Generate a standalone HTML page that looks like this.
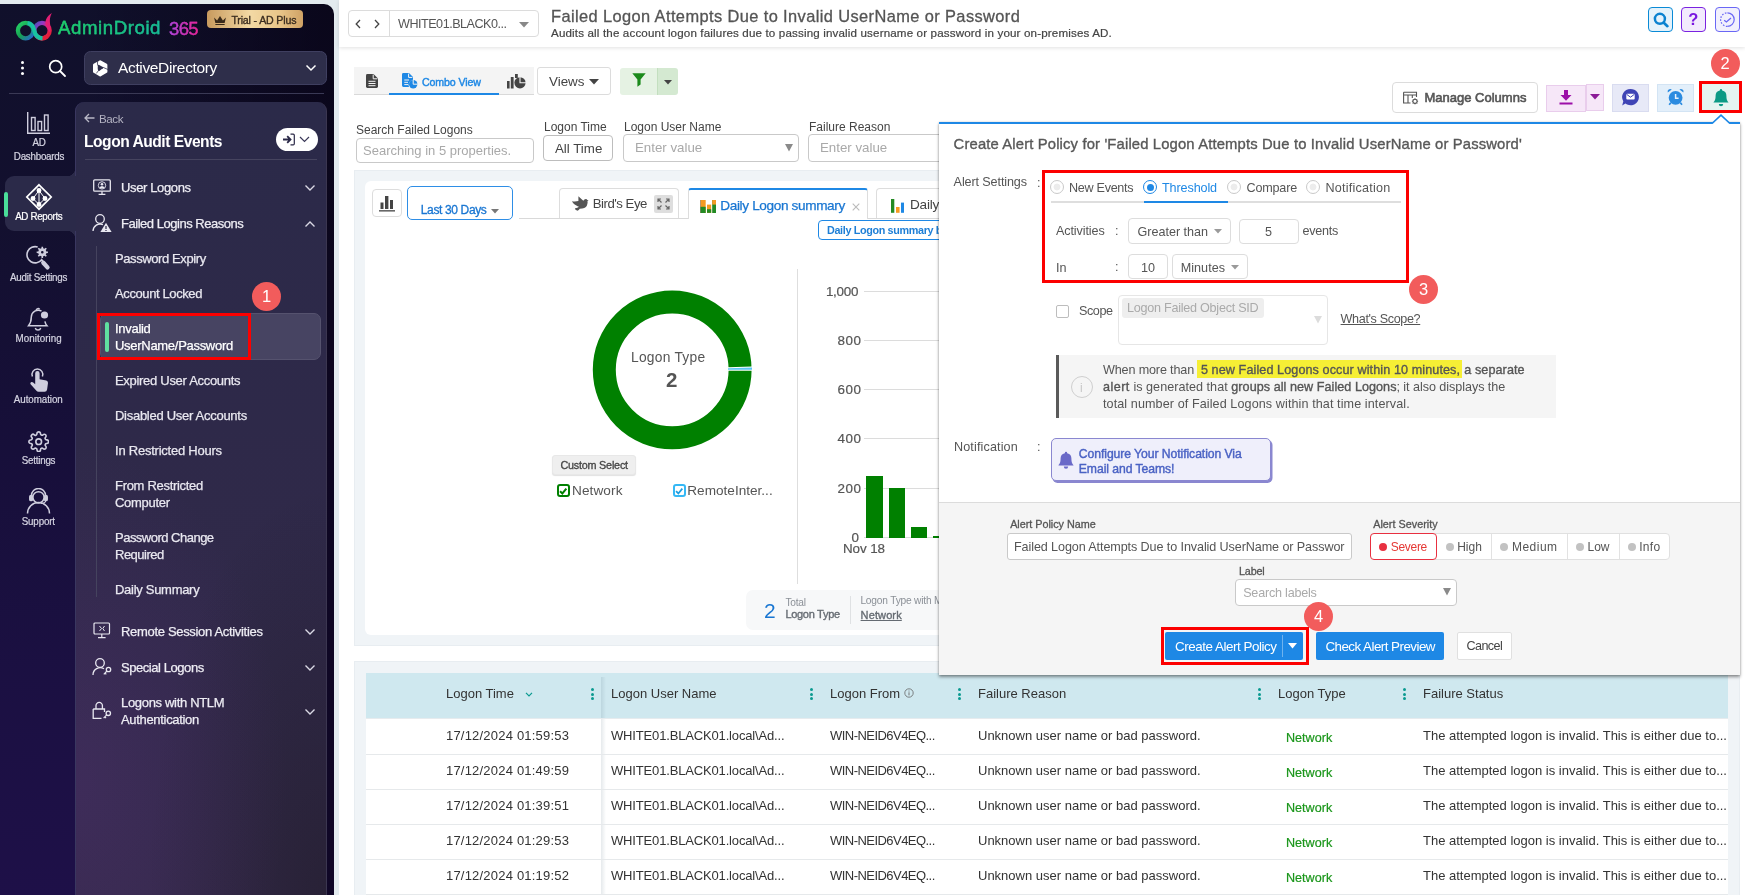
<!DOCTYPE html>
<html><head>
<meta charset="utf-8">
<title>AdminDroid</title>
<style>
*{box-sizing:border-box;margin:0;padding:0}
html,body{width:1745px;height:895px;overflow:hidden}
body{font-family:"Liberation Sans",sans-serif;background:#e3ebef;position:relative;color:#333}
#root{position:absolute;left:0;top:0;width:1745px;height:895px;will-change:transform}
.abs{position:absolute}
.t{position:absolute;white-space:nowrap;line-height:1}
/* ---------- sidebar ---------- */
#side{left:0;top:4px;width:334px;height:891px;border-radius:0 10px 0 0;background:linear-gradient(90deg,rgba(6,0,16,0) 25%,rgba(6,0,16,.6) 100%),linear-gradient(180deg,#10102b 0%,#13102f 25%,#170f3a 50%,#1b1042 75%,#1e1048 100%);overflow:hidden}
#panel{left:75px;top:102px;width:252px;height:800px;border-radius:9px 9px 0 0;background:radial-gradient(120% 60% at 0% 85%,rgba(95,50,135,.26) 0%,rgba(95,50,135,0) 70%),radial-gradient(90% 65% at 100% 100%,rgba(22,20,24,.40) 0%,rgba(22,20,24,0) 80%),linear-gradient(180deg,#2b2a49 0%,#2e2949 40%,#342a4a 100%);border-left:1px solid #3a3760;border-right:1px solid #3b3650}
.nav{position:absolute;left:1px;width:76px;text-align:center;color:#d6d5e3;font-size:9.8px;line-height:13px;letter-spacing:-.25px;-webkit-text-stroke:.2px currentColor;transform:scaleY(1.08)}
.mi{-webkit-text-stroke:.25px currentColor;position:absolute;left:115px;color:#e9e8f0;font-size:13px;line-height:17px;letter-spacing:-.33px;white-space:nowrap}
.mh{-webkit-text-stroke:.25px currentColor;position:absolute;left:121px;color:#eeedf4;font-size:13px;line-height:17px;letter-spacing:-.4px;white-space:nowrap}
.chev{position:absolute;left:303px;width:12px;height:8px}
/* ---------- main ---------- */
#hdr{left:339px;top:0;width:1406px;height:47px;background:#fff;box-shadow:0 1px 4px rgba(0,0,0,.12)}
.card{position:absolute;background:#fff}
.lbl{position:absolute;font-size:12px;color:#444;white-space:nowrap;line-height:1}
.inp{position:absolute;background:#fff;border:1px solid #c9c9c9;border-radius:3px}
/* table */
.th{position:absolute;top:686px;font-size:13px;color:#333;white-space:nowrap;line-height:15px}
.td{position:absolute;font-size:13px;color:#333;white-space:nowrap;line-height:15px}
.dots{position:absolute;top:688px;width:3px;height:12px}
.dots i{display:block;width:3px;height:3px;border-radius:2px;background:#0a9a90;margin-bottom:1.5px}
.rowline{position:absolute;left:366px;width:1362px;height:1px;background:#e6e9eb}
.yl{left:800px;font-size:13.4px;color:#555;-webkit-text-stroke:.2px #555}
.gl{left:864px;width:90px;height:1px;background:#dcdcdc}
/* popup */
.sd{top:543px;width:8px;height:8px;border-radius:4px;background:#c2c2c2}
.info{color:#555;font-size:12.8px}
.sb{-webkit-text-stroke:.35px currentColor}
.pt{position:absolute;white-space:nowrap;line-height:15px;color:#555;font-size:12.6px;letter-spacing:-.1px}
.badge{position:absolute;width:29px;height:29px;border-radius:15px;background:#f25c5c;color:#fff;font-size:16.5px;text-align:center;line-height:29px}
</style>
</head>
<body>
<div id="root">
<!-- SIDEBAR -->
<div id="side" class="abs"></div>
<div id="panel" class="abs"></div>
<!-- active nav tab -->
<div class="abs" style="left:5px;top:176px;width:71px;height:55px;border-radius:9px 0 0 9px;background:#2b2a49"></div>
<div class="abs" style="left:67px;top:168px;width:8px;height:8px;background:radial-gradient(circle at 0 0,transparent 8px,#2b2a49 8.5px)"></div>
<div class="abs" style="left:67px;top:231px;width:8px;height:8px;background:radial-gradient(circle at 0 100%,transparent 8px,#2b2a49 8.5px)"></div>
<div class="abs" style="left:4px;top:192px;width:4px;height:25px;border-radius:2px;background:#4ade9a"></div>
<!-- logo -->
<svg class="abs" style="left:14px;top:12px" width="42" height="30" viewBox="0 0 42 30">
 <defs>
  <linearGradient id="lg1" x1="0" y1="0" x2="1" y2="1"><stop offset="0" stop-color="#25d366"></stop><stop offset=".5" stop-color="#16a052"></stop><stop offset="1" stop-color="#2a62d8"></stop></linearGradient>
  <linearGradient id="lg2" x1="0" y1="0" x2="1" y2=".6"><stop offset="0" stop-color="#4450b5"></stop><stop offset=".4" stop-color="#9338c4"></stop><stop offset=".75" stop-color="#e31f74"></stop><stop offset="1" stop-color="#e0203a"></stop></linearGradient>
 </defs>
 <circle cx="28" cy="18.6" r="7.7" fill="none" stroke="url(#lg2)" stroke-width="4.3"></circle>
 <path d="M22.5 24 A7.7 7.7 0 0 0 33 24.5" fill="none" stroke="#e0203a" stroke-width="4.3"></path>
 <circle cx="11.6" cy="18.6" r="7.7" fill="none" stroke="url(#lg1)" stroke-width="4.3"></circle>
 <path d="M13.5 11.1 C18 11.6 19.6 15 20.3 18.6 C21 22.5 23.5 26 28.5 26.4" fill="none" stroke="#18c3a0" stroke-width="4.2"></path>
 <path d="M36.2 21 C38 14 33.5 9 37.8 .9 C32 4.5 30.2 10 32.4 14.5 Z" fill="#e31f74"></path>
</svg>
<div class="t" style="left: 58px; top: 19.4px; font-size: 18.6px; letter-spacing: 0.59px; background: linear-gradient(90deg, rgb(31, 209, 99), rgb(22, 184, 160)); -webkit-background-clip: text; background-clip: text; color: transparent; -webkit-text-stroke: .35px rgba(28,196,130,.9);">AdminDroid</div>
<div class="t" style="left: 169px; top: 19.6px; font-size: 18.5px; letter-spacing: -0.63px; background: linear-gradient(90deg, rgb(164, 75, 232), rgb(240, 32, 140)) text; color: transparent; -webkit-text-stroke: 0.3px rgba(200, 55, 190, 0.9);">365</div>
<!-- trial badge -->
<div class="abs" style="left:207px;top:10px;width:96px;height:18px;border-radius:4px;background:linear-gradient(90deg,#c89a5e 0%,#f3d9a4 45%,#e9c68a 75%,#d0a265 100%)"></div>
<svg class="abs" style="left:212.5px;top:14.5px" width="14" height="10.8" viewBox="0 0 13 10"><path d="M1 2.2 L3.8 5 L6.5 .8 L9.2 5 L12 2.2 L10.8 7.5 H2.2 Z M2.2 8.3 H10.8 V9.6 H2.2 Z" fill="#3a2a1a"></path></svg>
<div class="t" style="left: 231.4px; top: 15.2px; font-size: 10.6px; color: rgb(58, 44, 31); -webkit-text-stroke: 0.35px rgb(58, 44, 31); letter-spacing: -0.16px;">Trial - AD Plus</div>
<!-- dots & search -->
<div class="abs" style="left:21px;top:61px;width:3px;height:3px;border-radius:2px;background:#fff;box-shadow:0 5.5px 0 #fff,0 11px 0 #fff"></div>
<svg class="abs" style="left:48px;top:59px" width="19" height="19" viewBox="0 0 19 19"><circle cx="7.7" cy="7.7" r="6" fill="none" stroke="#fff" stroke-width="1.7"></circle><path d="M12 12 L17 17" stroke="#fff" stroke-width="1.8" stroke-linecap="round"></path></svg>
<!-- AD dropdown -->
<div class="abs" style="left:84px;top:51px;width:243px;height:34px;border-radius:6.5px;background:#2e2e4a;border:1px solid #3f3f60"></div>
<svg class="abs" style="left:92px;top:59.5px" width="17" height="17" viewBox="0 0 17 17"><path d="M8.2 1.6 L14.1 5 V11.7 L8.2 15.1 L2.3 11.7 V5 Z" fill="#fff" stroke="#fff" stroke-width="2.6" stroke-linejoin="round"/><path d="M5.9 5.2 Q6.2 4.6 7.2 5 L10.8 7 Q11.6 7.5 10.9 8.2 L7.2 10.9 Q6.3 11.3 6 10.3 Q5.5 7.8 5.9 5.2 Z" fill="#2e2e4a"/><path d="M5.9 .4 Q5.1 3 5.7 5.6 M10.9 7.3 L16.2 9.6 M6.5 10.6 L4.3 13.4" fill="none" stroke="#2e2e4a" stroke-width=".75"/></svg>
<div class="t" style="left:118px;top:60px;font-size:15.5px;color:#fff;letter-spacing:-.35px">ActiveDirectory</div>
<svg class="abs" style="left:305px;top:64px" width="12" height="8" viewBox="0 0 12 8"><path d="M1.5 1.5 L6 6 L10.5 1.5" fill="none" stroke="#fff" stroke-width="1.5"></path></svg>
<div class="abs" style="left:9px;top:93px;width:315px;height:1px;background:#3a3955"></div>

<!-- nav: AD Dashboards -->
<svg class="abs" style="left:26px;top:111px" width="25" height="24" viewBox="0 0 25 24" fill="none" stroke="#cfcede" stroke-width="1.4"><path d="M1.7 1 V22.3 H24"></path><rect x="5.5" y="6.5" width="3.6" height="13"></rect><rect x="12" y="10.5" width="3.6" height="9"></rect><rect x="18.5" y="4" width="3.6" height="15.5"></rect></svg>
<div class="nav" style="top:136px">AD<br>Dashboards</div>
<!-- nav: AD Reports -->
<svg class="abs" style="left:25px;top:183px" width="28" height="28" viewBox="0 0 28 28" fill="none" stroke="#fff" stroke-width="1.7"><path d="M14 1.8 L26.2 14 L14 26.2 L1.8 14 Z"></path><path d="M14 7.5 L20 15.5 L14 21.5 L8 15.5 Z M14 7.5 V21.5" stroke-width="1"></path><circle cx="14" cy="7.5" r="1.6" fill="#fff"></circle><circle cx="20" cy="15.5" r="1.6" fill="#fff"></circle><circle cx="8" cy="15.5" r="1.6" fill="#fff"></circle><circle cx="14" cy="21.5" r="1.6" fill="#fff"></circle></svg>
<div class="nav" style="top: 210px; color: rgb(255, 255, 255); left: 0.8px; letter-spacing: -0.34px;">AD Reports</div>
<!-- nav: Audit Settings -->
<svg class="abs" style="left:25px;top:245px" width="28" height="27" viewBox="0 0 28 27"><path d="M12.67 2 A8.15 8.15 0 1 0 16.66 14.65 L18 16.4" fill="none" stroke="#cfcede" stroke-width="1.6"/><path d="M18.3 17.7 L22.5 22.4" stroke="#cfcede" stroke-width="4.3" stroke-linecap="round"/><path d="M21.31 6.46 L22.94 6.50 L22.94 8.10 L21.31 8.14 L20.73 9.54 L21.85 10.73 L20.73 11.85 L19.54 10.73 L18.14 11.31 L18.10 12.94 L16.50 12.94 L16.46 11.31 L15.06 10.73 L13.87 11.85 L12.75 10.73 L13.87 9.54 L13.29 8.14 L11.66 8.10 L11.66 6.50 L13.29 6.46 L13.87 5.06 L12.75 3.87 L13.87 2.75 L15.06 3.87 L16.46 3.29 L16.50 1.66 L18.10 1.66 L18.14 3.29 L19.54 3.87 L20.73 2.75 L21.85 3.87 L20.73 5.06 Z M18.6 7.3 A1.3 1.3 0 1 0 16 7.3 A1.3 1.3 0 1 0 18.6 7.3 Z" fill="#cfcede" fill-rule="evenodd"/></svg>
<div class="nav" style="top: 271px; left: 0.6px; letter-spacing: -0.23px;">Audit Settings</div>
<!-- nav: Monitoring -->
<svg class="abs" style="left:27px;top:306px" width="24" height="27" viewBox="0 0 24 27" fill="none" stroke="#cfcede" stroke-width="1.5"><path d="M14.5 5 A7 7 0 0 0 4.3 11 C4.3 16 3 18 1.5 19.8 H20 C19 18.6 18.3 17.3 17.9 15.3"></path><path d="M8.3 22 A2.8 2.8 0 0 0 13.7 22"></path><path d="M9.2 4.2 A1.9 1.9 0 0 1 12.6 3.4"></path><circle cx="17.5" cy="9" r="3.6" fill="#cfcede" stroke="none"></circle></svg>
<div class="nav" style="top: 332px; left: 0.6px; letter-spacing: 0.05px;">Monitoring</div>
<!-- nav: Automation -->
<svg class="abs" style="left:27px;top:366px" width="24" height="28" viewBox="0 0 24 28"><path d="M8.2 12 V7.3 A2.2 2.2 0 0 1 12.6 7.3 V13.2 L19.3 14.6 Q21.2 15.1 21 17.1 L20.1 23.5 Q19.8 25.8 17.6 25.8 H11.6 Q10.2 25.8 9.2 24.6 L3.6 18.3 Q2.8 17.2 3.9 16.3 Q5 15.5 6.2 16.5 L8.2 18.3 Z" fill="#cfcede"></path><path d="M5.4 10.5 A5.4 5.4 0 1 1 15.4 10.5" fill="none" stroke="#cfcede" stroke-width="1.5"></path></svg>
<div class="nav" style="top: 393px; left: 0.3px; letter-spacing: -0.07px;">Automation</div>
<!-- nav: Settings -->
<svg class="abs" style="left:27.6px;top:430.8px" width="21.4" height="21.4" viewBox="0 0 24 24" fill="none" stroke="#cfcede" stroke-width="1.8" stroke-linejoin="round"><circle cx="12" cy="12" r="3.2"></circle><path d="M19.4 15a1.65 1.65 0 0 0 .33 1.82l.06.06a2 2 0 1 1-2.83 2.83l-.06-.06a1.65 1.65 0 0 0-1.82-.33 1.65 1.65 0 0 0-1 1.51V21a2 2 0 0 1-4 0v-.09A1.65 1.65 0 0 0 9 19.4a1.65 1.65 0 0 0-1.82.33l-.06.06a2 2 0 1 1-2.83-2.83l.06-.06a1.65 1.65 0 0 0 .33-1.82 1.65 1.65 0 0 0-1.51-1H3a2 2 0 0 1 0-4h.09A1.65 1.65 0 0 0 4.6 9a1.65 1.65 0 0 0-.33-1.82l-.06-.06a2 2 0 1 1 2.83-2.83l.06.06a1.65 1.65 0 0 0 1.82.33H9a1.65 1.65 0 0 0 1-1.51V3a2 2 0 0 1 4 0v.09a1.65 1.65 0 0 0 1 1.51 1.65 1.65 0 0 0 1.82-.33l.06-.06a2 2 0 1 1 2.83 2.83l-.06.06a1.65 1.65 0 0 0-.33 1.82V9a1.65 1.65 0 0 0 1.51 1H21a2 2 0 0 1 0 4h-.09a1.65 1.65 0 0 0-1.51 1z"></path></svg>
<div class="nav" style="top: 454px; left: 0.5px; letter-spacing: -0.23px;">Settings</div>
<!-- nav: Support -->
<svg class="abs" style="left:26px;top:488px" width="25" height="27" viewBox="0 0 25 27" fill="none" stroke="#cfcede" stroke-width="1.5"><circle cx="12.5" cy="9.3" r="5.6"></circle><path d="M1.5 25.5 A11 11 0 0 1 23.5 25.5"></path><path d="M5.5 10 V7.5 A7 7 0 0 1 19.5 7.5 V10"></path><rect x="3.8" y="7.6" width="2.6" height="5" rx="1.2" fill="#cfcede"></rect><rect x="18.6" y="7.6" width="2.6" height="5" rx="1.2" fill="#cfcede"></rect><path d="M19.8 12.5 Q19.5 15.3 15 15.5" stroke-width="1.2"></path></svg>
<div class="nav" style="top: 515px; left: 0.3px; letter-spacing: -0.16px;">Support</div>


<!-- panel header -->
<svg class="abs" style="left:84px;top:113px" width="11" height="10" viewBox="0 0 11 10"><path d="M5 1 L1 5 L5 9 M1 5 H10.5" fill="none" stroke="#b9b8c6" stroke-width="1.3"></path></svg>
<div class="t" style="left: 99px; top: 113px; font-size: 11.6px; color: rgb(180, 179, 194); letter-spacing: -0.45px;">Back</div>
<div class="t" style="left: 84px; top: 133.5px; font-size: 15.6px; font-weight: bold; color: rgb(255, 255, 255); letter-spacing: -0.48px;">Logon Audit Events</div>
<div class="abs" style="left:276px;top:128px;width:42px;height:23px;border-radius:12px;background:#fff"></div>
<svg class="abs" style="left:282px;top:133px" width="14" height="13" viewBox="0 0 14 13"><path d="M1 6.5 H8 M5.2 3.2 L8.5 6.5 L5.2 9.8" fill="none" stroke="#2a2847" stroke-width="1.8"></path><path d="M8.5 1.2 H11.2 Q12.3 1.2 12.3 2.3 V10.7 Q12.3 11.8 11.2 11.8 H8.5" fill="none" stroke="#2a2847" stroke-width="1.2"></path></svg>
<svg class="abs" style="left:299px;top:136px" width="11" height="7" viewBox="0 0 11 7"><path d="M1 1 L5.5 5.5 L10 1" fill="none" stroke="#3a3858" stroke-width="1.2"></path></svg>
<div class="abs" style="left:85px;top:159px;width:232px;height:1px;background:#46445f"></div>
<!-- User Logons -->
<svg class="abs" style="left:92px;top:178px" width="20" height="18" viewBox="0 0 20 18" fill="none" stroke="#e8e7f0" stroke-width="1.3"><rect x="1.7" y="1.9" width="16.6" height="11.3" rx="1"/><path d="M10 13.2 V16.2 M6.6 16.4 H13.4"/><circle cx="10" cy="7.4" r="3.7" stroke-width=".9"/><circle cx="10" cy="6.3" r="1.3" fill="#e8e7f0" stroke="none"/><path d="M7.2 9.6 Q10 6.4 12.8 9.6 Q10 11.6 7.2 9.6 Z" fill="#e8e7f0" stroke="none"/></svg>
<div class="mh" style="top: 179px; left: 121px; letter-spacing: -0.37px;">User Logons</div>
<svg class="abs" style="left:303.6px;top:183.6px" width="12" height="8" viewBox="0 0 12 8"><path d="M1.5 1.5 L6 6 L10.5 1.5" fill="none" stroke="#dad9e5" stroke-width="1.35"></path></svg>
<!-- Failed Logins Reasons -->
<svg class="abs" style="left:92px;top:213px" width="21" height="20" viewBox="0 0 21 20" fill="none" stroke="#e8e7f0" stroke-width="1.3"><circle cx="8" cy="6" r="4.3"></circle><path d="M1 18 A7.2 7.2 0 0 1 11 11.6"></path><path d="M14 9.8 L19.6 19 H8.4 Z" fill="#e8e7f0" stroke="none"></path><path d="M14 13 V16 M14 17 V18" stroke="#2a2847" stroke-width="1.2"></path></svg>
<div class="mh" style="top: 215px; left: 121px; letter-spacing: -0.47px;">Failed Logins Reasons</div>
<svg class="abs" style="left:303.6px;top:219.6px" width="12" height="8" viewBox="0 0 12 8"><path d="M1.5 6.5 L6 2 L10.5 6.5" fill="none" stroke="#dad9e5" stroke-width="1.35"></path></svg>
<div class="abs" style="left:96px;top:246px;width:1px;height:351px;background:#45435e"></div>
<div class="mi" style="top: 250px; left: 115px; letter-spacing: -0.4px;">Password Expiry</div>
<div class="mi" style="top: 285px; left: 115px; letter-spacing: -0.39px;">Account Locked</div>
<div class="abs" style="left:100px;top:313px;width:221px;height:47px;border-radius:7px;background:#474462;border:1px solid #55526e"></div>
<div class="abs" style="left:104.6px;top:321.5px;width:4.5px;height:30px;border-radius:2px;background:#5fe0a0"></div>
<div class="mi" style="top: 320px; color: rgb(255, 255, 255); left: 115px; letter-spacing: -0.29px;">Invalid<br>UserName/Password</div>
<div class="abs" style="left:97px;top:313px;width:154px;height:47px;border:3px solid #fc0000"></div>
<div class="mi" style="top: 372px; left: 115px; letter-spacing: -0.3px;">Expired User Accounts</div>
<div class="mi" style="top: 407px; left: 115px; letter-spacing: -0.28px;">Disabled User Accounts</div>
<div class="mi" style="top: 442px; left: 115px; letter-spacing: -0.23px;">In Restricted Hours</div>
<div class="mi" style="top: 477px; left: 115px; letter-spacing: -0.3px;">From Restricted<br>Computer</div>
<div class="mi" style="top: 529px; left: 115px; letter-spacing: -0.51px;">Password Change<br>Required</div>
<div class="mi" style="top: 581px; left: 115px; letter-spacing: -0.29px;">Daily Summary</div>
<!-- Remote Session -->
<svg class="abs" style="left:93px;top:622px" width="19" height="17" viewBox="0 0 19 17" fill="none" stroke="#e8e7f0" stroke-width="1.2"><rect x="1" y="1" width="15.5" height="11" rx="1"></rect><path d="M8.8 12 V15.3 M5 15.6 H12.6"></path><path d="M6.5 4 L8.5 6.5 L6.5 9 M11.5 4 L9.8 6.5 L11.5 9" stroke-width="1"></path></svg>
<div class="mh" style="top: 623px; left: 121px; letter-spacing: -0.32px;">Remote Session Activities</div>
<svg class="abs" style="left:303.6px;top:627.6px" width="12" height="8" viewBox="0 0 12 8"><path d="M1.5 1.5 L6 6 L10.5 1.5" fill="none" stroke="#dad9e5" stroke-width="1.35"></path></svg>
<svg class="abs" style="left:92px;top:657px" width="21" height="20" viewBox="0 0 21 20" fill="none" stroke="#e8e7f0" stroke-width="1.3"><circle cx="8" cy="6" r="4.3"></circle><path d="M1 18 A7.2 7.2 0 0 1 12 11.8"></path><circle cx="16.5" cy="12.5" r="2.2"></circle><path d="M14.9 14 L11.8 17.3 M13 16 L14.3 17.3" stroke-width="1.2"></path></svg>
<div class="mh" style="top: 659px; left: 121px; letter-spacing: -0.44px;">Special Logons</div>
<svg class="abs" style="left:303.6px;top:663.6px" width="12" height="8" viewBox="0 0 12 8"><path d="M1.5 1.5 L6 6 L10.5 1.5" fill="none" stroke="#dad9e5" stroke-width="1.35"></path></svg>
<svg class="abs" style="left:92px;top:700px" width="21" height="21" viewBox="0 0 21 21" fill="none" stroke="#e8e7f0" stroke-width="1.3"><path d="M1.2 9 H12.5 V12 M1.2 9 V18.3 H9.5"></path><path d="M4 9 V5.6 A3.2 3.2 0 0 1 10.4 5.6 V9"></path><circle cx="16.3" cy="13.3" r="2.2"></circle><path d="M14.7 14.8 L11.6 18.1 M12.8 16.8 L14.1 18.1" stroke-width="1.2"></path></svg>
<div class="mh" style="top: 694px; left: 121px; letter-spacing: -0.32px;">Logons with NTLM<br>Authentication</div>
<svg class="abs" style="left:303.6px;top:707.6px" width="12" height="8" viewBox="0 0 12 8"><path d="M1.5 1.5 L6 6 L10.5 1.5" fill="none" stroke="#dad9e5" stroke-width="1.35"></path></svg>
<!-- badge 1 -->
<div class="badge" style="left:252px;top:282px">1</div>

<!-- MAIN -->
<div class="abs" style="left:339px;top:0;width:1406px;height:895px;background:#fff"></div>
<div class="abs" style="left:354px;top:170px;width:1386px;height:476px;background:#f0f4f7;box-shadow:inset 0 0 0 1px #e8edf1"></div>
<div class="abs" style="left:354px;top:661px;width:1386px;height:240px;background:#f0f4f7;box-shadow:inset 0 0 0 1px #e8edf1"></div>
<div id="hdr" class="abs"></div>
<!-- header nav box -->
<div class="abs" style="left:348px;top:10px;width:191px;height:27px;border:1px solid #dcdcdc;border-radius:4px;background:#fff"></div>
<div class="abs" style="left:389px;top:10px;width:1px;height:27px;background:#dcdcdc"></div>
<svg class="abs" style="left:355px;top:19px" width="6" height="10" viewBox="0 0 6 10"><path d="M5 1 L1.2 5 L5 9" fill="none" stroke="#444" stroke-width="1.3"></path></svg>
<svg class="abs" style="left:374px;top:19px" width="6" height="10" viewBox="0 0 6 10"><path d="M1 1 L4.8 5 L1 9" fill="none" stroke="#444" stroke-width="1.3"></path></svg>
<div class="t" style="left: 398px; top: 18px; font-size: 12.6px; color: rgb(85, 85, 85); letter-spacing: -0.49px;">WHITE01.BLACK0...</div>
<svg class="abs" style="left:519px;top:22px" width="10" height="6" viewBox="0 0 10 6"><path d="M0 0 H10 L5 5.5 Z" fill="#888"></path></svg>
<div class="t" id="ttl" style="left: 551px; top: 8px; font-size: 16.4px; color: rgb(85, 85, 85); -webkit-text-stroke: .3px rgb(85,85,85); letter-spacing: 0.4px;">Failed Logon Attempts Due to Invalid UserName or Password</div>
<div class="t" id="sub" style="left: 551px; top: 27px; font-size: 11.6px; color: rgb(68, 68, 68); -webkit-text-stroke: .2px rgb(68,68,68); letter-spacing: 0.15px;">Audits all the account logon failures due to passing invalid username or password in your on-premises AD.</div>
<!-- header right icons -->
<div class="abs" style="left:1648px;top:7px;width:25px;height:25px;border-radius:4px;border:1.5px solid #0a8ad6;background:#e4f2fb"></div>
<svg class="abs" style="left:1653px;top:12px" width="16" height="16" viewBox="0 0 16 16"><circle cx="6.9" cy="6.8" r="5" fill="none" stroke="#0a82d0" stroke-width="2.5"/><path d="M10.8 10.7 L14.4 14.2" stroke="#0a82d0" stroke-width="2.6" stroke-linecap="round"/></svg>
<div class="abs" style="left:1681px;top:7px;width:25px;height:25px;border-radius:4px;border:1.5px solid #7a22e0;background:#f2eafd"></div>
<div class="t" style="left:1688.3px;top:10.6px;font-size:16.5px;font-weight:bold;color:#7a16e0">?</div>
<div class="abs" style="left:1715px;top:7px;width:25px;height:25px;border-radius:4px;border:1.5px solid #6a67f5;background:#f1f0fd"></div>
<svg class="abs" style="left:1719px;top:11px" width="17" height="17" viewBox="0 0 17 17"><path d="M8.4 1.8 A6.8 6.8 0 0 1 8.4 15.4" fill="none" stroke="#6a67f5" stroke-width="1.2"/><path d="M8.4 15.4 A6.8 6.8 0 0 1 8.4 1.8" fill="none" stroke="#6a67f5" stroke-width="1.2" stroke-dasharray="1.6 1.5"/><path d="M5.2 9.2 L7.4 11 L12 7" fill="none" stroke="#6a67f5" stroke-width="1.3"/></svg>
<!-- view tabs -->
<div class="abs" style="left:354px;top:67px;width:180px;height:28px;background:#f4f4f4;border-bottom:1px solid #d9d9d9"></div>
<div class="abs" style="left:389px;top:93px;width:110px;height:2px;background:#1e88e5"></div>
<svg class="abs" style="left:366px;top:74px" width="12" height="14" viewBox="0 0 12 14"><path d="M1.4 0 H7.5 L12 4.5 V12.6 Q12 14 10.6 14 H1.4 Q0 14 0 12.6 V1.4 Q0 0 1.4 0 Z" fill="#444"></path><path d="M7.2 .6 V4.8 H11.4" fill="none" stroke="#f4f4f4" stroke-width="1"></path><path d="M2.5 7.3 H9.5 M2.5 9.5 H9.5 M2.5 11.7 H9.5" stroke="#f4f4f4" stroke-width="1"></path></svg>
<svg class="abs" style="left:402px;top:73px" width="16" height="16" viewBox="0 0 16 16"><path d="M1.4 0 H7 L11 4 V7 A5 5 0 0 0 7 14 H1.4 Q0 14 0 12.6 V1.4 Q0 0 1.4 0 Z" fill="#1e88e5"></path><path d="M6.6 .6 V4.4 H10.4" fill="none" stroke="#f4f4f4" stroke-width="1"></path><path d="M2.3 7 H7 M2.3 9.3 H6 M2.3 11.6 H6" stroke="#f4f4f4" stroke-width="1"></path><circle cx="11.2" cy="11.2" r="4.2" fill="#1e88e5"></circle><path d="M11.2 6.6 V11.2 H15.8" fill="none" stroke="#f4f4f4" stroke-width="1"></path></svg>
<div class="t" style="left:422px;top:77px;font-size:10.6px;color:#1e88e5;-webkit-text-stroke:.42px #1e88e5;letter-spacing:-.1px">Combo View</div>
<svg class="abs" style="left:507px;top:74px" width="20" height="15" viewBox="0 0 20 15"><rect x="0" y="7" width="2.6" height="7.5" fill="#444"></rect><rect x="3.8" y="3" width="2.8" height="11.5" fill="#444"></rect><circle cx="13" cy="8.8" r="5.6" fill="#444"></circle><path d="M13 2.6 V8.8 H19" fill="none" stroke="#f4f4f4" stroke-width="1.1"></path><rect x="8" y="0" width="2.8" height="4" fill="#444"></rect></svg>
<div class="abs" style="left:537px;top:67px;width:74px;height:28px;border:1px solid #dcdcdc;border-radius:3px;background:#fff"></div>
<div class="t" style="left:549px;top:75px;font-size:13.4px;color:#444">Views</div>
<svg class="abs" style="left:589px;top:79px" width="10" height="6" viewBox="0 0 10 6"><path d="M0 0 H10 L5 5.5 Z" fill="#444"></path></svg>
<div class="abs" style="left:620px;top:68px;width:38px;height:27px;background:#e5f2e3;border-radius:3px 0 0 3px"></div>
<div class="abs" style="left:657px;top:68px;width:21px;height:27px;background:#d4e9d1;border-left:1px solid #c3dfbf;border-radius:0 3px 3px 0"></div>
<svg class="abs" style="left:632px;top:73px" width="14" height="14" viewBox="0 0 14 14"><path d="M.3 .3 H13.7 L8.6 6.6 V11.5 L5.4 13.7 V6.6 Z" fill="#1b8a1b"></path></svg>
<svg class="abs" style="left:664px;top:80px" width="8" height="5" viewBox="0 0 8 5"><path d="M0 0 H8 L4 4.5 Z" fill="#444"></path></svg>
<!-- right toolbar -->
<div class="abs" style="left:1392px;top:82px;width:146px;height:31px;border:1px solid #dcdcdc;border-radius:4px;background:#fff"></div>
<svg class="abs" style="left:1403px;top:91px" width="16" height="14" viewBox="0 0 16 14"><path d="M.6 1.2 H13.5 V6 M.6 1.2 V12 H7.5 M.6 4 H13.5 M5 4 V12 M9.3 4 V7" fill="none" stroke="#555" stroke-width="1.1"></path><circle cx="12" cy="10.3" r="2.1" fill="none" stroke="#555" stroke-width="1.1"></circle><path d="M12 7.2 V8.2 M12 12.4 V13.4 M8.9 10.3 H9.9 M14.1 10.3 H15.1 M9.8 8.1 L10.5 8.8 M13.5 11.8 L14.2 12.5 M14.2 8.1 L13.5 8.8 M9.8 12.5 L10.5 11.8" stroke="#555" stroke-width=".9"></path></svg>
<div class="t" style="left: 1424.4px; top: 91px; font-size: 13px; -webkit-text-stroke: .6px rgb(85, 85, 85); color: rgb(85, 85, 85); letter-spacing: 0.01px;">Manage Columns</div>
<div class="abs" style="left:1546px;top:85px;width:40px;height:27px;background:#f6e7f8;border:1px solid #e9cdec"></div>
<div class="abs" style="left:1586px;top:84px;width:18px;height:27px;background:#f6e7f8;border:1px solid #e9cdec"></div>
<svg class="abs" style="left:1559px;top:90px" width="14" height="15" viewBox="0 0 14 15"><path d="M5 0 H9 V5 H12.5 L7 10.8 L1.5 5 H5 Z M.5 12.6 H13.5 V14.6 H.5 Z" fill="#9c0fa8"></path></svg>
<svg class="abs" style="left:1590px;top:94px" width="10" height="6" viewBox="0 0 10 6"><path d="M0 0 H10 L5 5.5 Z" fill="#8b1a96"></path></svg>
<div class="abs" style="left:1612px;top:84px;width:37px;height:28px;background:#e7e9f7;border:1px solid #d9dcf0"></div>
<svg class="abs" style="left:1621px;top:88px" width="19" height="19" viewBox="0 0 19 19"><path d="M9.5 1 A8.3 8.1 0 1 1 4.4 15.4 L1.2 17.6 L2.3 13.2 A8.3 8.1 0 0 1 9.5 1 Z" fill="#3f44b5"></path><rect x="5.3" y="5.8" width="8.4" height="5.8" rx="1" fill="#fff"></rect><path d="M5.6 6.3 L9.5 9.2 L13.4 6.3" fill="none" stroke="#3f44b5" stroke-width="1"></path></svg>
<div class="abs" style="left:1657px;top:84px;width:37px;height:28px;background:#e3effa;border:1px solid #d3e4f4"></div>
<svg class="abs" style="left:1666px;top:88px" width="19" height="19" viewBox="0 0 19 19"><circle cx="9.6" cy="9.8" r="6.9" fill="#2b8be0"></circle><path d="M9.6 6 V10.2 H12.6" fill="none" stroke="#e8f1fb" stroke-width="1.5"></path><path d="M1.8 4.6 A2.6 2.6 0 0 1 5.8 1.6 Z M17.4 4.6 A2.6 2.6 0 0 0 13.4 1.6 Z" fill="#2b8be0"></path><path d="M4.8 14.8 L3.2 16.8 M14.4 14.8 L16 16.8" stroke="#2b8be0" stroke-width="1.7"></path></svg>
<div class="abs" style="left:1702px;top:84px;width:38px;height:27px;background:#e5f4f1"></div>
<svg class="abs" style="left:1713px;top:88.4px" width="16" height="19.4" viewBox="0 0 16 19"><path d="M8 .8 Q9.2 .8 9.2 2.2 A5.4 5.4 0 0 1 13.4 7.6 C13.4 12 14.6 13 15.6 14.4 H.4 C1.4 13 2.6 12 2.6 7.6 A5.4 5.4 0 0 1 6.8 2.2 Q6.8 .8 8 .8 Z" fill="#0b9a85"></path><path d="M5.8 15.8 A2.2 2.2 0 0 0 10.2 15.8 Z" fill="#0b9a85"></path></svg>
<div class="abs" style="left:1699px;top:81px;width:43px;height:32px;border:3px solid #fc0000"></div>
<div class="badge" style="left:1710.7px;top:48.5px">2</div>
<!-- filters -->
<div class="lbl" style="left:356px;top:124px">Search Failed Logons</div>
<div class="inp" style="left:356px;top:138px;width:178px;height:25px;border-radius:4px"></div>
<div class="t" style="left:363px;top:144px;font-size:13px;color:#a9a9a9">Searching in 5 properties.</div>
<div class="lbl" style="left:544px;top:121px">Logon Time</div>
<div class="inp" style="left:543px;top:135px;width:70px;height:26px;border-color:#bdbdbd;border-radius:4px"></div>
<div class="t" style="left:555px;top:142px;font-size:13.3px;color:#444">All Time</div>
<div class="lbl" style="left:624px;top:121px">Logon User Name</div>
<div class="inp" style="left:623px;top:134px;width:176px;height:28px;border-radius:4px"></div>
<div class="t" style="left:635px;top:141px;font-size:13.3px;color:#a9a9a9">Enter value</div>
<svg class="abs" style="left:785px;top:144px" width="8" height="8" viewBox="0 0 8 8"><path d="M0 0 H8 L4 7.5 Z" fill="#8a8a8a"></path></svg>
<div class="lbl" style="left:809px;top:121px">Failure Reason</div>
<div class="inp" style="left:808px;top:134px;width:176px;height:28px;border-radius:4px"></div>
<div class="t" style="left:820px;top:141px;font-size:13.3px;color:#a9a9a9">Enter value</div>

<div class="card" style="left:365px;top:181px;width:1375px;height:454px;border-radius:6px 0 0 6px"></div>
<div class="abs" style="left:372px;top:189px;width:30px;height:28px;border:1px solid #ddd;border-radius:4px;background:#fff"></div>
<svg class="abs" style="left:379px;top:195px" width="16" height="17" viewBox="0 0 16 17"><rect x="1.5" y="7.5" width="3" height="6.5" fill="#444"></rect><rect x="6" y="1" width="3.4" height="13" fill="#444"></rect><rect x="11" y="5" width="3" height="9" fill="#444"></rect><rect x="0" y="15.2" width="16" height="1.3" fill="#444"></rect></svg>
<div class="abs" style="left:407px;top:186px;width:106px;height:34px;border:1.5px solid #2e8ee6;border-radius:5px;background:#fff"></div>
<div class="t" style="left: 420.8px; top: 204px; font-size: 12px; color: rgb(25, 118, 210); -webkit-text-stroke: .3px rgb(25,118,210); letter-spacing: -0.36px;">Last 30 Days</div>
<svg class="abs" style="left:491px;top:209px" width="8" height="5" viewBox="0 0 8 5"><path d="M0 0 H8 L4 4.5 Z" fill="#777"></path></svg>
<!-- Bird's eye tab -->
<div class="abs" style="left:559px;top:188px;width:120px;height:30px;border:1px solid #ddd;border-bottom:none;border-radius:4px 4px 0 0;background:#fff"></div>
<svg class="abs" style="left:572px;top:196px" width="17" height="15" viewBox="0 0 17 15"><path d="M6.4 .15 L11.3 4.8 Q12.3 3 13.9 3.05 Q14.9 3.2 15.3 3.9 L16.6 4.2 L15.5 5.1 Q15.8 6.5 15.4 7.8 Q15 10 13.9 11 Q12.5 12.3 10.2 12.5 L7.8 12.8 Q6.8 14.2 5.5 14.7 Q3.8 14.3 2.9 13.1 L3.2 12.2 Q5.5 11.9 7 10.75 Q5.4 10.4 4.4 9.6 Q2.9 9 2 8.1 Q.8 6.9 0 5.2 Q3 5.6 6.4 5.1 Z" fill="#555"></path></svg>
<div class="t" style="left: 592.7px; top: 197px; font-size: 13.2px; color: rgb(68, 68, 68); letter-spacing: -0.47px;">Bird's Eye</div>
<div class="abs" style="left:654px;top:195px;width:19px;height:18px;background:#dedede;border-radius:2px"></div>
<svg class="abs" style="left:657px;top:198px" width="13" height="12" viewBox="0 0 13 12" fill="none" stroke="#666" stroke-width="1.2"><path d="M1 4 V1 H4 M1 1 L4.5 4.5 M12 4 V1 H9 M12 1 L8.5 4.5 M1 8 V11 H4 M1 11 L4.5 7.5 M12 8 V11 H9 M12 11 L8.5 7.5"></path></svg>
<div class="abs" style="left:519px;top:218px;width:430px;height:1px;background:#d9d9d9"></div>
<!-- active tab -->
<div class="abs" style="left:687.6px;top:187.6px;width:180.6px;height:31.4px;border:1px solid #ddd;border-top:2.2px solid #1e88e5;border-bottom:none;border-radius:3px 3px 0 0;background:#fff"></div>
<svg class="abs" style="left:700px;top:199.6px" width="16.4" height="13.6" viewBox="0 0 16.4 13.6"><rect x=".3" y="0" width="5.4" height="13.6" fill="#f59a23"></rect><rect x=".3" y="6.8" width="5.4" height="6.8" fill="#238a23"></rect><rect x="7" y="4.6" width="4.2" height="9" fill="#f59a23"></rect><rect x="7" y="9.2" width="4.2" height="3.6" fill="#238a23"></rect><rect x="12.2" y="0" width="4.2" height="13.6" fill="#238a23"></rect><rect x="12.2" y="0" width="4.2" height="4.6" fill="#f59a23"></rect><rect x="0" y="0" width=".5" height="13.6" fill="#777"></rect><rect x="0" y="13.1" width="16.4" height=".5" fill="#777"></rect></svg>
<div class="t" style="left: 720.3px; top: 199px; font-size: 13.6px; color: rgb(25, 118, 210); -webkit-text-stroke: .25px rgb(25,118,210); letter-spacing: -0.36px;">Daily Logon summary</div>
<svg class="abs" style="left:852px;top:203px" width="8" height="8" viewBox="0 0 8 8"><path d="M.7 .7 L7.3 7.3 M7.3 .7 L.7 7.3" stroke="#bbb" stroke-width="1.1"></path></svg>
<!-- next tab -->
<div class="abs" style="left:876px;top:188px;width:80px;height:30px;border:1px solid #ddd;border-bottom:none;border-radius:4px 4px 0 0;background:#fff"></div>
<svg class="abs" style="left:891px;top:199px" width="13.4" height="13.8" viewBox="0 0 13.4 13.8"><rect x="0" y="0" width="3.3" height="13.8" fill="#238a23"></rect><rect x="5" y="8" width="3.6" height="5.8" fill="#f59a23"></rect><rect x="10" y="3.6" width="3.3" height="10.2" fill="#1e88e5"></rect></svg>
<div class="t" style="left:910px;top:197.8px;font-size:13.6px;color:#444;letter-spacing:-.2px">Daily</div>
<div class="abs" style="left:818.3px;top:220.4px;width:140px;height:19.4px;border:1px solid #1e88e5;border-radius:4px;background:#fff"></div>
<div class="t" style="left:827px;top:225px;font-size:10.8px;font-weight:bold;color:#1e7fd6;letter-spacing:-.35px">Daily Logon summary by</div>
<!-- donut -->
<svg class="abs" style="left:591px;top:290px" width="162" height="162" viewBox="0 0 162 162"><circle cx="81.2" cy="79.8" r="67.9" fill="none" stroke="#008000" stroke-width="23"></circle><path d="M137 77.2 L161 76.4 L161 80.8 L137 80.8 Z" fill="#fff"></path><path d="M137 78.3 L161 77.6 L161 79.7 L137 79.7 Z" fill="#5bc6f2"></path></svg>
<div class="t" style="left:631px;top:351px;font-size:13.8px;color:#555;letter-spacing:.25px">Logon Type</div>
<div class="t" style="left:666px;top:370px;font-size:20.5px;font-weight:bold;color:#555">2</div>
<div class="abs" style="left:552px;top:455.2px;width:84px;height:19.4px;border:1px solid #e8e8e8;border-radius:3px;background:#efefef;box-shadow:0 1px 1px rgba(0,0,0,.12)"></div>
<div class="t" style="left: 560.4px; top: 460.3px; font-size: 10.8px; -webkit-text-stroke: 0.3px rgb(68, 68, 68); color: rgb(68, 68, 68); letter-spacing: -0.21px;">Custom Select</div>
<div class="abs" style="left:557px;top:484px;width:13px;height:13.2px;border:2px solid #008000;border-radius:3px"></div>
<svg class="abs" style="left:559.3px;top:486.6px" width="8.4" height="8.4" viewBox="0 0 8 8"><path d="M1 4 L3.2 6.2 L7 1.6" fill="none" stroke="#008000" stroke-width="1.9"></path></svg>
<div class="t" style="left:572px;top:484px;font-size:13.6px;color:#555;letter-spacing:.1px">Network</div>
<div class="abs" style="left:672.6px;top:484px;width:13px;height:13.2px;border:2px solid #35b8f5;border-radius:3px"></div>
<svg class="abs" style="left:674.9px;top:486.6px" width="8.4" height="8.4" viewBox="0 0 8 8"><path d="M1 4 L3.2 6.2 L7 1.6" fill="none" stroke="#1f9fe0" stroke-width="1.7"></path></svg>
<div class="t" style="left: 687.3px; top: 484px; font-size: 13.6px; color: rgb(85, 85, 85); letter-spacing: 0px;">RemoteInter...</div>
<div class="abs" style="left:797px;top:269px;width:1px;height:315px;background:#dedede"></div>
<!-- y axis -->
<div class="t yl" style="top: 285px; left: 825.9px; letter-spacing: -0.24px;">1,000</div>
<div class="t yl" style="top: 334px; left: 837.6px; letter-spacing: 0.45px;">800</div>
<div class="t yl" style="top: 383px; left: 837.6px; letter-spacing: 0.45px;">600</div>
<div class="t yl" style="top: 432px; left: 837.6px; letter-spacing: 0.45px;">400</div>
<div class="t yl" style="top: 482px; left: 837.6px; letter-spacing: 0.45px;">200</div>
<div class="t yl" style="top: 531px; left: 851.4px; letter-spacing: -0.55px;">0</div>
<div class="abs gl" style="top:291px"></div><div class="abs gl" style="top:340px"></div><div class="abs gl" style="top:389px"></div><div class="abs gl" style="top:438px"></div><div class="abs gl" style="top:488px"></div><div class="abs gl" style="top:537px"></div>
<div class="abs" style="left:866px;top:476px;width:17px;height:62px;background:#008000"></div>
<div class="abs" style="left:889px;top:488px;width:16px;height:50px;background:#008000"></div>
<div class="abs" style="left:911px;top:527px;width:16px;height:11px;background:#008000"></div>
<div class="abs" style="left:933px;top:536px;width:10px;height:2px;background:#008000"></div>
<div class="t" style="left:843px;top:542px;font-size:13.4px;color:#555;-webkit-text-stroke:.2px #555;letter-spacing:-.1px">Nov 18</div>
<!-- summary -->
<div class="abs" style="left:746px;top:590px;width:220px;height:40px;background:#f7f8f9;border-radius:7px"></div>
<div class="t" style="left:764px;top:599.5px;font-size:21px;color:#1976d2">2</div>
<div class="t" style="left:785.4px;top:598px;font-size:10.2px;color:#8b9097;letter-spacing:-.25px">Total</div>
<div class="t" style="left: 785.4px; top: 609px; font-size: 11px; -webkit-text-stroke: 0.35px rgb(101, 107, 114); color: rgb(101, 107, 114); letter-spacing: -0.29px;">Logon Type</div>
<div class="abs" style="left:849.5px;top:596px;width:1px;height:28px;background:#dfe1e3"></div>
<div class="t" style="left:860.4px;top:596px;font-size:10.2px;color:#8b9097;letter-spacing:-.2px">Logon Type with Max</div>
<div class="t" style="left: 860.6px; top: 610px; font-size: 11px; -webkit-text-stroke: 0.35px rgb(101, 107, 114); color: rgb(101, 107, 114); text-decoration: underline; letter-spacing: 0.12px;">Network</div>


<div class="abs" style="left:366px;top:673px;width:1362px;height:45px;background:#cfe8ef"></div>
<div class="abs" style="left:366px;top:718px;width:1362px;height:177px;background:#fff"></div>
<div class="abs" style="left:600.5px;top:677px;width:5px;height:218px;background:linear-gradient(90deg,rgba(60,90,110,.13),rgba(60,90,110,0))"></div>
<div class="abs" style="left:366px;top:718px;width:1362px;height:1px;background:#e6ebee"></div>
<div class="th" style="left:446px">Logon Time</div>
<svg class="abs" style="left:525px;top:692px" width="8" height="5" viewBox="0 0 8 5"><path d="M1 .8 L4 3.8 L7 .8" fill="none" stroke="#0a9a90" stroke-width="1.2"></path></svg>
<div class="dots" style="left:591px"><i></i><i></i><i></i></div>
<div class="th" style="left:611px">Logon User Name</div>
<div class="dots" style="left:810px"><i></i><i></i><i></i></div>
<div class="th" style="left:830px">Logon From</div>
<svg class="abs" style="left:904px;top:688px" width="10" height="10" viewBox="0 0 10 10"><circle cx="5" cy="5" r="4.2" fill="none" stroke="#666" stroke-width=".8"></circle><path d="M5 4.3 V7.4 M5 2.6 V3.5" stroke="#666" stroke-width=".9"></path></svg>
<div class="dots" style="left:958px"><i></i><i></i><i></i></div>
<div class="th" style="left:978px">Failure Reason</div>
<div class="dots" style="left:1258px"><i></i><i></i><i></i></div>
<div class="th" style="left:1278px">Logon Type</div>
<div class="dots" style="left:1403px"><i></i><i></i><i></i></div>
<div class="th" style="left:1423px">Failure Status</div>
<div class="td" style="left: 446px; top: 728px; letter-spacing: 0.2px;">17/12/2024 01:59:53</div><div class="td" style="left: 611px; top: 728px; letter-spacing: -0.16px;">WHITE01.BLACK01.local\Ad...</div><div class="td" style="left: 830px; top: 728px; letter-spacing: -0.54px;">WIN-NEID6V4EQ...</div><div class="td" style="left:978px;top:728px">Unknown user name or bad password.</div><div class="td" style="left:1286px;top:730.8px;color:#1a961a;font-size:12.6px;-webkit-text-stroke:.2px #1a961a">Network</div><div class="td" style="left:1423px;top:728px">The attempted logon is invalid. This is either due to...</div><div class="rowline" style="top:754px"></div>
<div class="td" style="left: 446px; top: 763px; letter-spacing: 0.2px;">17/12/2024 01:49:59</div><div class="td" style="left: 611px; top: 763px; letter-spacing: -0.16px;">WHITE01.BLACK01.local\Ad...</div><div class="td" style="left: 830px; top: 763px; letter-spacing: -0.54px;">WIN-NEID6V4EQ...</div><div class="td" style="left:978px;top:763px">Unknown user name or bad password.</div><div class="td" style="left:1286px;top:765.8px;color:#1a961a;font-size:12.6px;-webkit-text-stroke:.2px #1a961a">Network</div><div class="td" style="left:1423px;top:763px">The attempted logon is invalid. This is either due to...</div><div class="rowline" style="top:789px"></div>
<div class="td" style="left: 446px; top: 798px; letter-spacing: 0.2px;">17/12/2024 01:39:51</div><div class="td" style="left: 611px; top: 798px; letter-spacing: -0.16px;">WHITE01.BLACK01.local\Ad...</div><div class="td" style="left: 830px; top: 798px; letter-spacing: -0.54px;">WIN-NEID6V4EQ...</div><div class="td" style="left:978px;top:798px">Unknown user name or bad password.</div><div class="td" style="left:1286px;top:800.8px;color:#1a961a;font-size:12.6px;-webkit-text-stroke:.2px #1a961a">Network</div><div class="td" style="left:1423px;top:798px">The attempted logon is invalid. This is either due to...</div><div class="rowline" style="top:824px"></div>
<div class="td" style="left: 446px; top: 833px; letter-spacing: 0.2px;">17/12/2024 01:29:53</div><div class="td" style="left: 611px; top: 833px; letter-spacing: -0.16px;">WHITE01.BLACK01.local\Ad...</div><div class="td" style="left: 830px; top: 833px; letter-spacing: -0.54px;">WIN-NEID6V4EQ...</div><div class="td" style="left:978px;top:833px">Unknown user name or bad password.</div><div class="td" style="left:1286px;top:835.8px;color:#1a961a;font-size:12.6px;-webkit-text-stroke:.2px #1a961a">Network</div><div class="td" style="left:1423px;top:833px">The attempted logon is invalid. This is either due to...</div><div class="rowline" style="top:859px"></div>
<div class="td" style="left: 446px; top: 868px; letter-spacing: 0.2px;">17/12/2024 01:19:52</div><div class="td" style="left: 611px; top: 868px; letter-spacing: -0.16px;">WHITE01.BLACK01.local\Ad...</div><div class="td" style="left: 830px; top: 868px; letter-spacing: -0.54px;">WIN-NEID6V4EQ...</div><div class="td" style="left:978px;top:868px">Unknown user name or bad password.</div><div class="td" style="left:1286px;top:870.8px;color:#1a961a;font-size:12.6px;-webkit-text-stroke:.2px #1a961a">Network</div><div class="td" style="left:1423px;top:868px">The attempted logon is invalid. This is either due to...</div><div class="rowline" style="top:894px"></div>


<!-- POPUP -->
<div class="abs" style="left:939px;top:122px;width:800.5px;height:553px;background:#fff;box-shadow:0 2px 3px rgba(0,0,0,.42),0 0 2px rgba(0,0,0,.16)"></div>
<div class="abs" style="left:939px;top:502px;width:800.5px;height:173px;background:#f5f5f5;border-top:1px solid #dcdcdc"></div>
<div class="abs" style="left:939px;top:121.5px;width:800.5px;height:2.4px;background:#1e88e5"></div>
<svg class="abs" style="left:1712px;top:114px" width="18" height="10" viewBox="0 0 18 10"><path d="M0 10 L9 1 L18 10 Z" fill="#fff"></path><path d="M0 9.5 L9 1.2 L18 9.5" fill="none" stroke="#1e88e5" stroke-width="1.6"></path></svg>
<div class="pt" style="left: 953.6px; top: 137px; font-size: 14.8px; color: rgb(88, 88, 88); -webkit-text-stroke: 0.35px rgb(88, 88, 88); letter-spacing: 0.15px;">Create Alert Policy for 'Failed Logon Attempts Due to Invalid UserName or Password'</div>
<div class="pt" style="left: 953.6px; top: 175.4px; letter-spacing: -0.11px;">Alert Settings</div>
<div class="pt" style="left:1037px;top:176px">:</div>
<div class="abs" style="left:1050px;top:180px;width:14px;height:14px;border-radius:7px;border:1px solid #c9c9c9;background:radial-gradient(circle,#ececec 0,#ececec 3px,#fff 3.8px)"></div><div class="pt" style="left: 1069px; top: 181px; letter-spacing: -0.29px;">New Events</div>
<div class="abs" style="left:1143px;top:180px;width:14px;height:14px;border-radius:7px;border:1.5px solid #1e88e5;background:#fff"></div><div class="abs" style="left:1146.5px;top:183.5px;width:7px;height:7px;border-radius:4px;background:#1e88e5"></div><div class="pt" style="left: 1162px; top: 181px; color: rgb(30, 136, 229); letter-spacing: -0.11px;">Threshold</div>
<div class="abs" style="left:1227px;top:180px;width:14px;height:14px;border-radius:7px;border:1px solid #c9c9c9;background:radial-gradient(circle,#ececec 0,#ececec 3px,#fff 3.8px)"></div><div class="pt" style="left: 1246.5px; top: 181px; letter-spacing: -0.19px;">Compare</div>
<div class="abs" style="left:1306px;top:180px;width:14px;height:14px;border-radius:7px;border:1px solid #c9c9c9;background:radial-gradient(circle,#ececec 0,#ececec 3px,#fff 3.8px)"></div><div class="pt" style="left: 1325.5px; top: 181px; letter-spacing: 0.23px;">Notification</div>
<div class="abs" style="left:1051px;top:201px;width:350px;height:1.5px;background:#dedede"></div>
<div class="abs" style="left:1144px;top:200.5px;width:84px;height:2.5px;background:#1e88e5"></div>
<div class="pt" style="left: 1056px; top: 224.3px; letter-spacing: -0.11px;">Activities</div><div class="pt" style="left:1115px;top:224px">:</div>
<div class="inp" style="left:1128px;top:218px;width:103px;height:26px;border-color:#ddd;border-radius:4px"></div>
<div class="pt" style="left: 1137.6px; top: 225px; letter-spacing: -0.03px;">Greater than</div>
<svg class="abs" style="left:1214px;top:229px" width="8" height="5" viewBox="0 0 8 5"><path d="M0 0 H8 L4 4.5 Z" fill="#9a9a9a"></path></svg>
<div class="inp" style="left:1239px;top:219.2px;width:60px;height:24.8px;border-color:#ddd;border-radius:4px"></div>
<div class="pt" style="left:1265px;top:225px">5</div>
<div class="pt" style="left: 1302.6px; top: 224.3px; letter-spacing: -0.29px;">events</div>
<div class="pt" style="left:1056px;top:261px">In</div><div class="pt" style="left:1115px;top:260px">:</div>
<div class="inp" style="left:1128px;top:254px;width:40px;height:25px;border-color:#ddd;border-radius:4px"></div>
<div class="pt" style="left:1141px;top:261px">10</div>
<div class="inp" style="left:1172px;top:254px;width:76px;height:25px;border-color:#ddd;border-radius:4px"></div>
<div class="pt" style="left: 1180.8px; top: 261px; letter-spacing: 0.01px;">Minutes</div>
<svg class="abs" style="left:1231px;top:265px" width="8" height="5" viewBox="0 0 8 5"><path d="M0 0 H8 L4 4.5 Z" fill="#9a9a9a"></path></svg>
<div class="abs" style="left:1042px;top:170px;width:367px;height:113px;border:3px solid #fc0000"></div>
<div class="badge" style="left:1409px;top:275px">3</div>
<!-- scope -->
<div class="abs" style="left:1056px;top:305px;width:13px;height:13px;border:1px solid #bdbdbd;border-radius:2px;background:#fff"></div>
<div class="pt" style="left: 1079px; top: 304.3px; letter-spacing: -0.44px;">Scope</div>
<div class="inp" style="left:1118px;top:295px;width:210px;height:50px;border-color:#e6e6e6;border-radius:4px"></div>
<div class="abs" style="left:1122px;top:298px;width:142px;height:20px;border-radius:3px;background:#eeeeee"></div>
<div class="pt" style="left: 1127px; top: 301.3px; color: rgb(170, 170, 170); font-size: 12.6px; letter-spacing: -0.25px;">Logon Failed Object SID</div>
<svg class="abs" style="left:1314px;top:316px" width="8" height="8" viewBox="0 0 8 8"><path d="M0 0 H8 L4 7.5 Z" fill="#dcdcdc"></path></svg>
<div class="pt" style="left: 1340.6px; top: 312px; text-decoration: underline; letter-spacing: -0.36px;">What's Scope?</div>
<!-- info -->
<div class="abs" style="left:1056px;top:355px;width:500px;height:63px;background:#f5f5f5;border-left:3px solid #5a5a5a"></div>
<div class="abs" style="left:1071px;top:376px;width:22px;height:22px;border-radius:11px;border:1px solid #cfcfcf"></div>
<div class="pt" style="left:1080px;top:381px;color:#c8c8c8;font-size:12px">i</div>
<div class="pt info" style="left: 1103px; top: 363px; letter-spacing: -0.15px;">When more than</div>
<div class="abs" style="left:1196.5px;top:360px;width:265.5px;height:18px;background:#f6ef35"></div>
<div class="pt info sb" style="left: 1200.9px; top: 363px; letter-spacing: 0.1px;">5 new Failed Logons occur within 10 minutes,</div>
<div class="pt info sb" style="left: 1464.2px; top: 363px; letter-spacing: 0.1px;">a separate</div>
<div class="pt info sb" style="left: 1103px; top: 380px; letter-spacing: 0.44px;">alert</div>
<div class="pt info" style="left: 1133.4px; top: 380px; letter-spacing: 0.03px;">is generated that</div>
<div class="pt info sb" style="left: 1231.3px; top: 380px; letter-spacing: 0.05px;">groups all new Failed Logons</div>
<div class="pt info" style="left: 1396.4px; top: 380px; letter-spacing: -0.05px;">; it also displays the</div>
<div class="pt info" style="left: 1103px; top: 397px; letter-spacing: 0.09px;">total number of Failed Logons within that time interval.</div>
<!-- notification -->
<div class="pt" style="left: 954px; top: 440.3px; letter-spacing: 0.13px;">Notification</div><div class="pt" style="left:1037px;top:440px">:</div>
<div class="abs" style="left:1051px;top:438px;width:220px;height:43px;border:1px solid #8a87d0;border-radius:5px;background:#efeffb;box-shadow:1.5px 2px 0 #8a87d0"></div>
<svg class="abs" style="left:1058px;top:451px" width="16" height="18" viewBox="0 0 16 18"><path d="M8 .8 Q9.2 .8 9.2 2.2 A5.4 5.4 0 0 1 13.4 7.6 C13.4 12 14.6 13 15.6 14.4 H.4 C1.4 13 2.6 12 2.6 7.6 A5.4 5.4 0 0 1 6.8 2.2 Q6.8 .8 8 .8 Z" fill="#6a69c8"></path><path d="M5.8 15.6 A2.2 2.2 0 0 0 10.2 15.6 Z" fill="#6a69c8"></path></svg>
<div class="pt" style="left: 1078.8px; top: 446.5px; font-size: 12.2px; -webkit-text-stroke: 0.4px rgb(74, 98, 196); color: rgb(74, 98, 196); line-height: 15px; white-space: normal; width: 200px; letter-spacing: -0.07px;">Configure Your Notification Via<br>Email and Teams!</div>
<!-- bottom -->
<div class="pt" style="left: 1010.2px; top: 516.5px; font-size: 10.8px; -webkit-text-stroke: 0.3px rgb(85, 85, 85); color: rgb(85, 85, 85); letter-spacing: -0.02px;">Alert Policy Name</div>
<div class="inp" style="left:1007px;top:533px;width:345px;height:27px;border-color:#c9c9c9"></div>
<div class="pt" style="left:1014px;top:540px;width:331px;overflow:hidden">Failed Logon Attempts Due to Invalid UserName or Password</div>
<div class="pt" style="left: 1373.2px; top: 516.5px; font-size: 10.8px; -webkit-text-stroke: 0.3px rgb(85, 85, 85); color: rgb(85, 85, 85); letter-spacing: 0.02px;">Alert Severity</div>
<div class="abs" style="left:1370px;top:533px;width:300px;height:27px;border:1px solid #e0e0e0;border-radius:4px;background:#fff"></div>
<div class="abs" style="left:1491px;top:534px;width:1px;height:25px;background:#e2e2e2"></div>
<div class="abs" style="left:1567px;top:534px;width:1px;height:25px;background:#e2e2e2"></div>
<div class="abs" style="left:1619px;top:534px;width:1px;height:25px;background:#e2e2e2"></div>
<div class="abs" style="left:1370px;top:533px;width:67px;height:27px;border:1.5px solid #e83040;border-radius:4px;background:#fff"></div>
<div class="abs sd" style="left:1379px;background:#e83040"></div><div class="pt" style="left: 1390.8px; top: 540px; color: rgb(229, 57, 53); letter-spacing: -0.31px; font-size: 12px;">Severe</div>
<div class="abs sd" style="left:1446px"></div><div class="pt" style="left: 1457.2px; top: 540px; letter-spacing: -0.02px; font-size: 12px;">High</div>
<div class="abs sd" style="left:1500px"></div><div class="pt" style="left: 1512px; top: 540px; letter-spacing: 0.47px; font-size: 12px;">Medium</div>
<div class="abs sd" style="left:1575.7px"></div><div class="pt" style="left: 1587.6px; top: 540px; letter-spacing: -0.04px; font-size: 12px;">Low</div>
<div class="abs sd" style="left:1627.8px"></div><div class="pt" style="left: 1639.2px; top: 540px; letter-spacing: 0.32px; font-size: 12px;">Info</div>
<div class="pt" style="left: 1239px; top: 563.5px; font-size: 10.8px; -webkit-text-stroke: 0.3px rgb(85, 85, 85); color: rgb(85, 85, 85); letter-spacing: -0.17px;">Label</div>
<div class="inp" style="left:1235px;top:579px;width:222px;height:27px;border-color:#c9c9c9;border-radius:4px"></div>
<div class="pt" style="left: 1243.2px; top: 586px; color: rgb(170, 170, 170); letter-spacing: -0.22px;">Search labels</div>
<svg class="abs" style="left:1443px;top:588px" width="8" height="8" viewBox="0 0 8 8"><path d="M0 0 H8 L4 7.5 Z" fill="#8a8a8a"></path></svg>
<div class="abs" style="left:1165px;top:632px;width:138px;height:28px;background:#1e88e5;border-radius:2px"></div>
<div class="pt" style="left: 1175px; top: 639px; color: rgb(255, 255, 255); font-size: 13.4px; letter-spacing: -0.45px;">Create Alert Policy</div>
<div class="abs" style="left:1282px;top:635px;width:1px;height:22px;background:#6fb3ee"></div>
<svg class="abs" style="left:1288px;top:643px" width="9" height="6" viewBox="0 0 9 6"><path d="M0 0 H9 L4.5 5.5 Z" fill="#fff"></path></svg>
<div class="abs" style="left:1161px;top:627px;width:148px;height:38px;border:3px solid #fc0000"></div>
<div class="abs" style="left:1316px;top:632px;width:128px;height:28px;background:#1e88e5;border-radius:2px"></div>
<div class="pt" style="left: 1325.4px; top: 639px; color: rgb(255, 255, 255); font-size: 13.4px; letter-spacing: -0.54px;">Check Alert Preview</div>
<div class="abs" style="left:1457px;top:632px;width:55px;height:28px;background:#fff;border:1px solid #e0e0e0;border-radius:2px"></div>
<div class="pt" style="left: 1466.5px; top: 639px; color: rgb(68, 68, 68); letter-spacing: -0.59px; font-size: 12.6px;">Cancel</div>
<div class="badge" style="left:1304px;top:602px">4</div>












</div>
</body></html>
